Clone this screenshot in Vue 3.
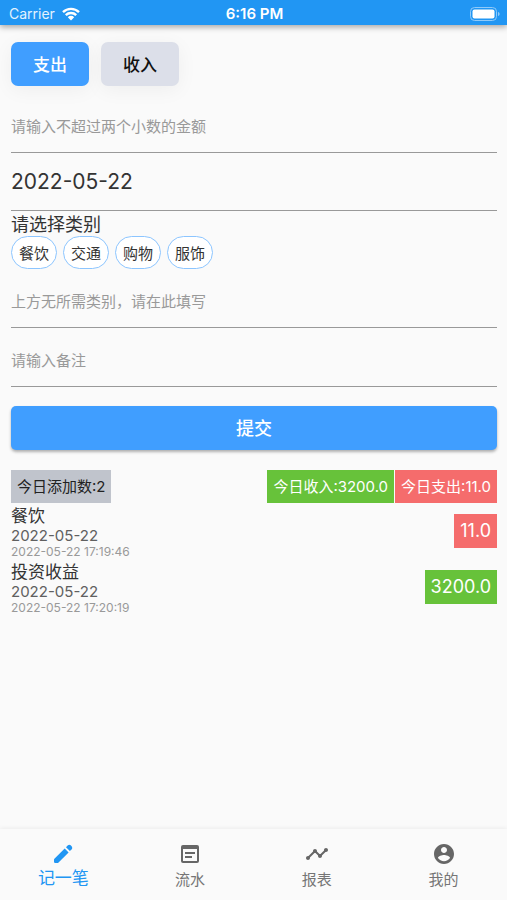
<script setup>
import { ref } from 'vue'

const kind = ref('out')
const amount = ref('')
const date = ref('2022-05-22')
const category = ref('')
const remark = ref('')
const categories = ['餐饮', '交通', '购物', '服饰']
const records = [
  { id: 1, title: '餐饮', date: '2022-05-22', time: '2022-05-22 17:19:46', value: '11.0', type: 'out' },
  { id: 2, title: '投资收益', date: '2022-05-22', time: '2022-05-22 17:20:19', value: '3200.0', type: 'in' },
]
const tabs = [
  { label: '记一笔', active: true, icon: 'M3.4 16.8 13.7 6.500 17.6 10.400 7.300 20.700Q7 21 6.500 21H4.200Q3 21 3 19.800V17.700Q3 17.200 3.400 16.800zM15 5.200 16.900 3.300Q18.300 2.300 19.700 3.300L20.800 4.400Q21.800 5.800 20.800 7.200L18.900 9.100z' },
  { label: '流水', icon: 'M19 3H5a2 2 0 0 0-2 2v14a2 2 0 0 0 2 2h14a2 2 0 0 0 2-2V5a2 2 0 0 0-2-2zm0 16H5V7h14v12zM7 10h10v2H7zM7 14h7v2H7z' },
  { label: '报表', icon: 'M23 8c0 1.1-.9 2-2 2-.18 0-.35-.02-.51-.07l-3.56 3.55c.05.16.07.34.07.52 0 1.1-.9 2-2 2s-2-.9-2-2c0-.18.02-.36.07-.52l-2.55-2.55c-.16.05-.34.07-.52.07s-.36-.02-.52-.07l-4.55 4.56c.05.16.07.33.07.51 0 1.1-.9 2-2 2s-2-.9-2-2 .9-2 2-2c.18 0 .35.02.51.07l4.56-4.55C8.02 9.36 8 9.18 8 9c0-1.1.9-2 2-2s2 .9 2 2c0 .18-.02.36-.07.52l2.55 2.55c.16-.05.34-.07.52-.07s.36.02.52.07l3.55-3.56C19.02 8.35 19 8.18 19 8c0-1.1.9-2 2-2s2 .9 2 2z' },
  { label: '我的', icon: 'M12 2C6.48 2 2 6.48 2 12s4.48 10 10 10 10-4.48 10-10S17.52 2 12 2zm0 3c1.66 0 3 1.34 3 3s-1.34 3-3 3-3-1.34-3-3 1.34-3 3-3zm0 14.2c-2.5 0-4.71-1.28-6-3.22.03-1.99 4-3.08 6-3.08 1.99 0 5.97 1.09 6 3.08-1.29 1.94-3.5 3.22-6 3.22z' },
]
</script>

<template>
  <div class="page">
    <header class="status">
      <div class="carrier">
        <span>Carrier</span>
        <svg class="wifi" viewBox="0 0 18 14" aria-hidden="true">
          <path d="M1 5.2a11.4 11.4 0 0 1 16 0M3.8 8.2a7.4 7.4 0 0 1 10.4 0" />
          <path class="dot" d="M9 13.4 5.8 10.2a4.5 4.5 0 0 1 6.4 0z" />
        </svg>
      </div>
      <span class="clock">6:16 PM</span>
      <svg class="battery" viewBox="0 0 30 14" aria-hidden="true">
        <rect class="shell" x="0.5" y="0.5" width="26" height="13" rx="4" />
        <rect class="charge" x="2.5" y="2.5" width="22" height="9" rx="2" />
        <path class="tip" d="M28 5v4c1-.4 1.600-1.100 1.600-2S29 5.400 28 5z" />
      </svg>
    </header>

    <main>
      <div class="kinds">
        <button type="button" class="kind" :class="{ selected: kind === 'out' }" @click="kind = 'out'">支出</button>
        <button type="button" class="kind" :class="{ selected: kind === 'in' }" @click="kind = 'in'">收入</button>
      </div>

      <form @submit.prevent>
        <input v-model="amount" class="field" inputmode="decimal" aria-label="金额" placeholder="请输入不超过两个小数的金额">
        <input v-model="date" class="field date" aria-label="日期">
        <p class="prompt">请选择类别</p>
        <div class="chips">
          <button v-for="c in categories" :key="c" type="button" class="chip" @click="category = c">{{ c }}</button>
        </div>
        <input v-model="category" class="field" aria-label="类别" placeholder="上方无所需类别，请在此填写">
        <input v-model="remark" class="field" aria-label="备注" placeholder="请输入备注">
        <button type="submit" class="submit">提交</button>
      </form>

      <div class="summary">
        <span class="tag count">今日添加数:2</span>
        <span class="tag in">今日收入:3200.0</span>
        <span class="tag out">今日支出:11.0</span>
      </div>

      <ul class="records">
        <li v-for="r in records" :key="r.id">
          <div>
            <div class="title">{{ r.title }}</div>
            <div class="day">{{ r.date }}</div>
            <div class="time">{{ r.time }}</div>
          </div>
          <span class="value" :class="r.type">{{ r.value }}</span>
        </li>
      </ul>
    </main>

    <nav>
      <a v-for="t in tabs" :key="t.label" href="#" :class="{ active: t.active }">
        <svg viewBox="0 0 24 24" aria-hidden="true"><path :d="t.icon" fill-rule="evenodd" /></svg>
        <span>{{ t.label }}</span>
      </a>
    </nav>
  </div>
</template>

<style>
body { margin: 0; background: #fafafa; }
</style>

<style scoped>
* { box-sizing: border-box; }
.page {
  min-height: 100vh;
  display: flex;
  flex-direction: column;
  background: #fafafa;
  color: #333;
  font-family: Inter, "Noto Sans CJK SC", sans-serif;
}
button, input { font-family: inherit; margin: 0; }
button { border: 0; padding: 0; cursor: pointer; }
.status {
  height: 25px;
  padding: 2px 7px 0 9px;
  display: grid;
  grid-template-columns: 1fr auto 1fr;
  align-items: center;
  background: #2196f3;
  color: #fff;
  font-size: 14px;
  box-shadow: 0 2px 6px rgba(0, 0, 0, 0.35);
}
.carrier { display: flex; align-items: center; gap: 7px; color: #e3f2fe; }
.clock { font-size: 15px; font-weight: 600; line-height: 20px; }
.wifi { width: 18px; height: 14px; fill: none; stroke: #fff; stroke-width: 2.4; }
.wifi .dot { fill: #fff; stroke: none; }
.battery { width: 30px; height: 14px; justify-self: end; }
.shell { fill: none; stroke: #90caf9; }
.charge { fill: #fff; }
.tip { fill: #90caf9; }
main { flex: 1; padding: 17px 10px 20px 11px; }
.kinds { display: flex; gap: 12px; margin-bottom: 8px; }
.kind {
  width: 78px;
  height: 44px;
  border-radius: 7px;
  background: #dcdfe9;
  color: #111;
  font-size: 17px;
  font-weight: 500;
  padding-bottom: 2px;
  box-shadow: 0 4px 20px rgba(0, 0, 0, 0.05);
}
.kind.selected { background: #409eff; color: #fff; }
.field {
  display: block;
  width: 100%;
  height: 59px;
  padding: 6px 0 0;
  border: 0;
  border-bottom: 1px solid #999;
  border-radius: 0;
  outline: 0;
  background: transparent;
  color: #333;
  font-size: 15px;
}
.field::placeholder { color: #999; opacity: 1; }
.field.date { height: 58px; padding: 0; font-size: 21px; }
.prompt { margin: 0; padding-top: 2px; font-size: 18px; line-height: 23px; }
.chips { display: flex; flex-wrap: wrap; gap: 6px; }
.chip {
  height: 33px;
  padding: 0 7px;
  border: 1px solid #8cc5ff;
  border-radius: 17px;
  background: #fff;
  color: #333;
  font-size: 15px;
}
.submit {
  display: block;
  width: 100%;
  height: 44px;
  margin-top: 19px;
  padding-bottom: 2px;
  border-radius: 5px;
  background: #409eff;
  color: #fff;
  font-size: 18px;
  font-weight: 500;
  box-shadow: 0 2px 3px rgba(0, 0, 0, 0.3);
}
.summary { display: flex; gap: 1px; margin-top: 20px; font-size: 15px; line-height: 33px; }
.tag { padding: 0 6px; color: #fff; white-space: nowrap; }
.tag.count { margin-right: auto; background: #c0c4cc; color: #222; }
.tag.in, .value.in { background: #67c23a; }
.tag.out, .value.out { background: #f56c6c; }
.records { margin: 0; padding: 0; list-style: none; }
.records li { display: flex; align-items: center; justify-content: space-between; }
.title { padding-top: 2px; font-size: 17px; line-height: 22px; }
.day { font-size: 15px; line-height: 18px; color: #606060; }
.time { font-size: 12px; line-height: 14px; color: #999; }
.value { padding: 0 6px; color: #fff; font-size: 18px; line-height: 34px; }
nav {
  height: 71px;
  display: grid;
  grid-template-columns: repeat(4, 1fr);
  background: #fafafa;
  box-shadow: 0 -1px 4px rgba(0, 0, 0, 0.06);
}
nav a {
  display: flex;
  flex-direction: column;
  align-items: center;
  padding-top: 13px;
  gap: 4px;
  color: #757575;
  font-size: 15px;
  line-height: 20px;
  text-decoration: none;
}
nav svg { width: 24px; height: 24px; fill: #666; }
nav a.active { color: #2196f3; font-size: 17px; gap: 2px; }
nav a.active svg { fill: #2196f3; }
</style>
